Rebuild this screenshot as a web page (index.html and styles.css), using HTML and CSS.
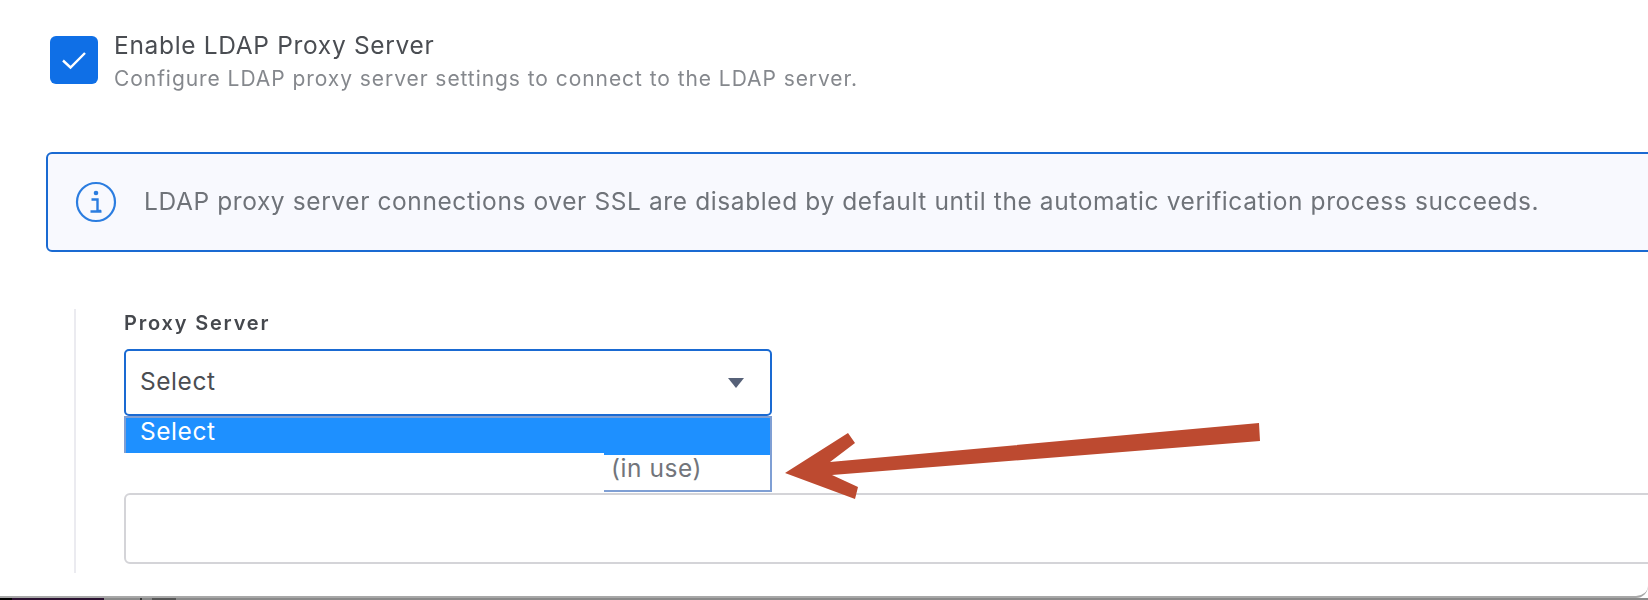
FILE: index.html
```html
<!DOCTYPE html>
<html lang="en">
<head>
<meta charset="utf-8">
<title>LDAP Proxy Server</title>
<link rel="stylesheet" href="styles.css">
</head>
<body>
<main class="card">
  <section class="enable">
    <span class="checkbox">
      <svg viewBox="0 0 48 48" width="48" height="48" aria-hidden="true"><path d="M13 24.5l7.5 7L35 17" fill="none" stroke="#fff" stroke-width="2.4"/></svg>
    </span>
    <div class="enable-text">
      <div class="enable-title">Enable LDAP Proxy Server</div>
      <div class="enable-sub">Configure LDAP proxy server settings to connect to the LDAP server.</div>
    </div>
  </section>

  <section class="alert">
    <svg class="alert-icon" viewBox="0 0 42 42" width="42" height="42" aria-hidden="true">
      <circle cx="21" cy="21" r="19" fill="none" stroke="#2b7de0" stroke-width="2.2"/>
      <circle cx="21" cy="12" r="2.3" fill="#2b7de0"/>
      <path d="M16.5 18.5h6v11.5h3.5M15.5 30.5h11" fill="none" stroke="#2b7de0" stroke-width="2.4"/>
    </svg>
    <p class="alert-text">LDAP proxy server connections over SSL are disabled by default until the automatic verification process succeeds.</p>
  </section>

  <section class="fields">
    <label class="field-label">Proxy Server</label>
    <div class="select-wrap">
      <div class="select">
        <span>Select</span>
        <span class="caret"></span>
      </div>
      <div class="dropdown">
        <div class="option option-active">Select</div>
        <div class="option option-used">(in use)</div>
        <div class="redaction"></div>
      </div>
    </div>
    <div class="textarea"></div>
  </section>

  <svg class="arrow" viewBox="0 0 1648 600" width="1648" height="600" aria-hidden="true">
    <polygon points="785,473 848,433 855,443 830,462 1259,423 1260,441 832,475 858,487 855,499" fill="#bd4a30"/>
  </svg>
</main>
<footer class="strip">
  <span class="strip-a"></span><span class="strip-b"></span><span class="strip-c"></span><span class="strip-d"></span><span class="strip-e"></span><span class="strip-f"></span>
</footer>
</body>
</html>
```
FILE: styles.css
```css
* { box-sizing: border-box; }
html, body { margin: 0; padding: 0; }
body {
  width: 1648px;
  height: 600px;
  overflow: hidden;
  background: #fff;
  font-family: "Inter", "Open Sans", sans-serif;
  position: relative;
}
.card {
  height: 598px;
  width: 1648px;
  padding: 30px 0 0 46px;
  border-bottom-right-radius: 12px;
  border-bottom: 2px solid #a8a8a8;
  overflow: hidden;
  filter: blur(0.45px);
}
.enable {
  display: flex;
  padding-left: 4px;
  gap: 16px;
  height: 122px;
}
.checkbox {
  width: 48px;
  height: 48px;
  margin-top: 6px;
  background: #0f6fe6;
  border-radius: 6px;
  flex: none;
}
.checkbox svg { display: block; }
.enable-title {
  font-size: 24.5px;
  line-height: 30px;
  letter-spacing: 0.67px;
  color: #4a4d52;
}
.enable-sub {
  font-size: 21px;
  line-height: 30px;
  margin-top: 4px;
  letter-spacing: 0.94px;
  color: #85888d;
}
.alert {
  width: 1640px;
  height: 100px;
  border: 2px solid #1a6ad2;
  border-radius: 6px;
  background: #f8f9fe;
  display: flex;
  align-items: center;
  padding-left: 27px;
  gap: 27px;
}
.alert-icon { flex: none; }
.alert-text {
  margin: -2px 0 0;
  font-size: 24.5px;
  letter-spacing: 0.6px;
  color: #6f7379;
  white-space: nowrap;
}
.fields {
  margin-top: 57px;
  margin-left: 28px;
  height: 264px;
  border-left: 2px solid #ebebf0;
  padding-left: 48px;
}
.field-label {
  display: block;
  font-size: 20px;
  font-weight: 600;
  line-height: 24px;
  letter-spacing: 1.8px;
  color: #45484d;
  padding-top: 2px;
}
.select-wrap {
  position: relative;
  width: 648px;
  margin-top: 14px;
}
.select {
  height: 67px;
  border: 2px solid #1a6ad2;
  border-radius: 5px;
  background: #fff;
  padding: 0 26px 4px 14px;
  display: flex;
  align-items: center;
  justify-content: space-between;
  font-size: 24.5px;
  letter-spacing: 0.55px;
  color: #4a4d52;
}
.caret {
  width: 0;
  height: 0;
  margin-top: 4px;
  border-left: 8px solid transparent;
  border-right: 8px solid transparent;
  border-top: 10px solid #566178;
}
.dropdown {
  position: absolute;
  left: 0;
  top: 67px;
  width: 648px;
  height: 76px;
  background: #fff;
  border: 2px solid #7f9fd4;
  font-size: 24.5px;
  letter-spacing: 0.55px;
}
.option {
  height: 37px;
  line-height: 26px;
  padding-left: 14px;
}
.option-active {
  background: #1e90ff;
  color: #fff;
}
.option-used {
  line-height: 26px;
  padding-left: 485px;
  color: #72757b;
}
.redaction {
  position: absolute;
  left: -2px;
  bottom: -2px;
  width: 480px;
  height: 39px;
  background: #fff;
}
.textarea {
  margin-top: 77px;
  width: 1560px;
  height: 71px;
  border: 2px solid #d4d4d8;
  border-radius: 6px;
  background: #fff;
}
.arrow {
  position: absolute;
  left: 0;
  top: 0;
  pointer-events: none;
}
.strip {
  display: flex;
  height: 2px;
  background: #8a8a8a;
}
.strip-a { width: 12px; background: #000; }
.strip-b { width: 92px; background: #2a1030; }
.strip-c { width: 36px; background: #8a8a8a; }
.strip-d { width: 2px; background: #333; }
.strip-e { width: 10px; background: #888; }
.strip-f { width: 24px; background: #555; }
```
